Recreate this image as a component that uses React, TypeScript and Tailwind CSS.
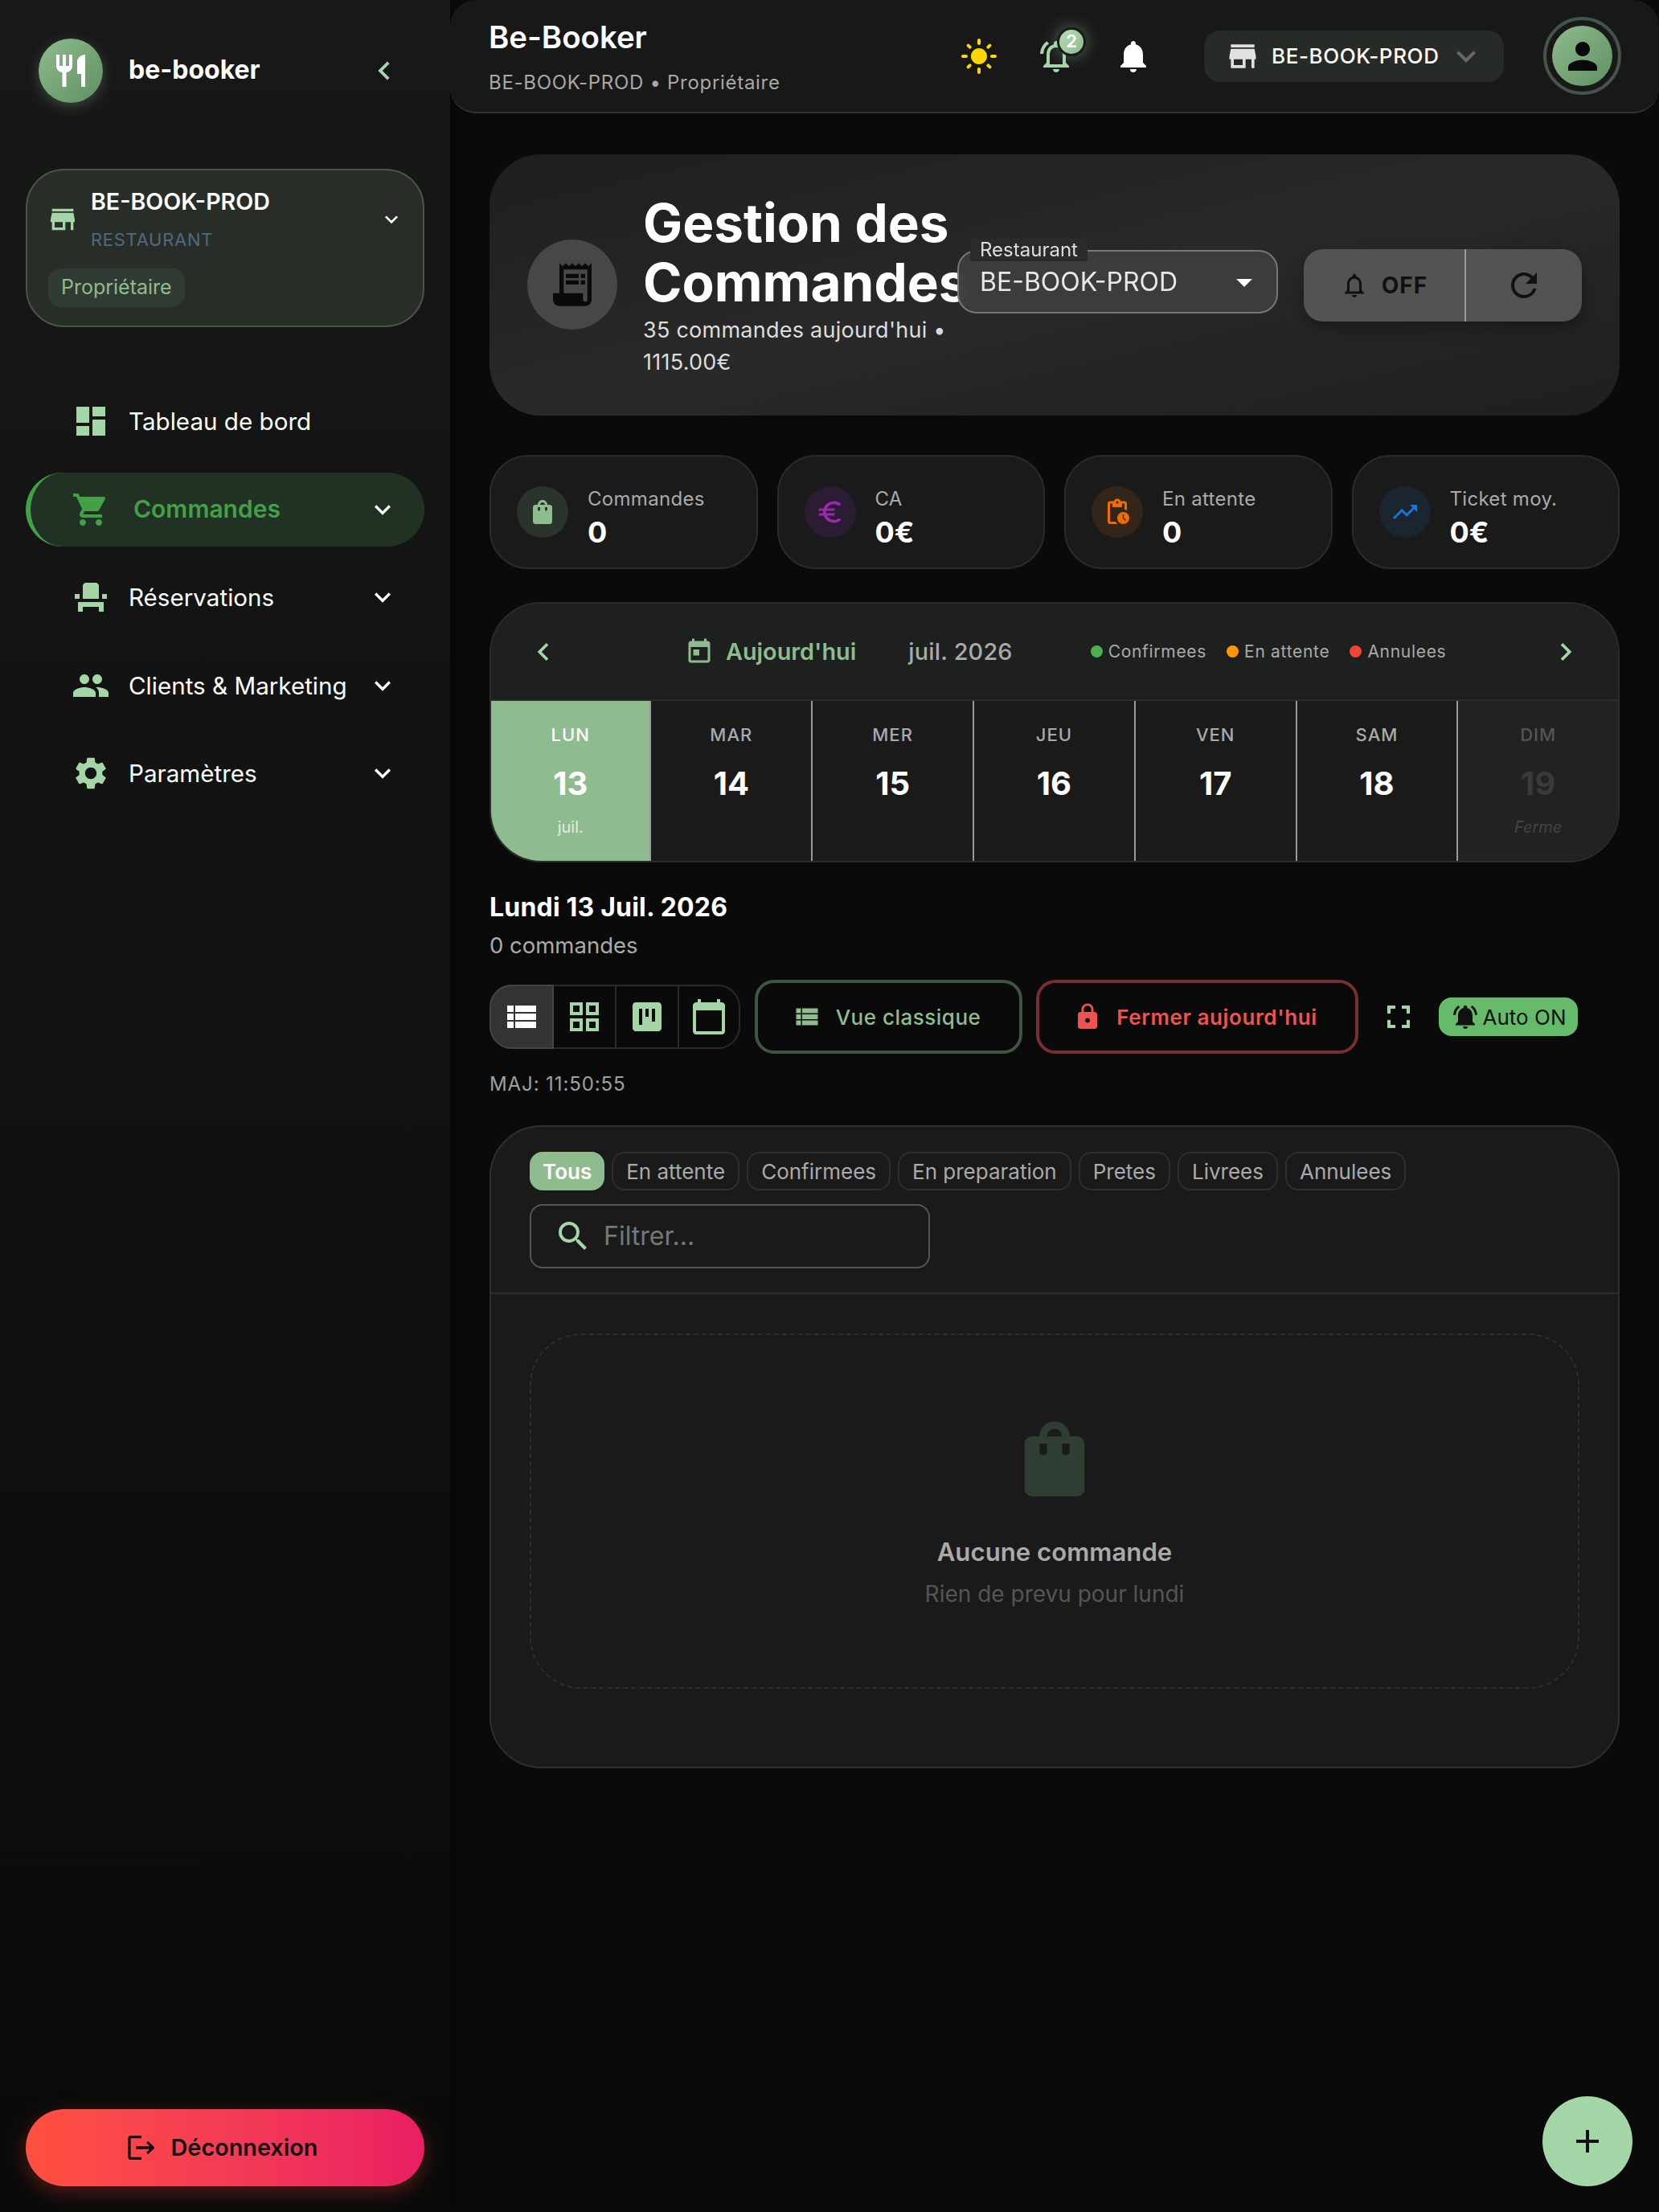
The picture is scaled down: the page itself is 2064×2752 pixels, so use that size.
import React from "react";
import {
  MdRestaurant, MdChevronLeft, MdChevronRight, MdStore, MdExpandMore, MdDashboard, MdShoppingCart, MdEventSeat, MdPeople, MdSettings,
  MdLogout, MdLightMode, MdOutlineNotificationsActive, MdNotifications, MdPerson, MdReceiptLong, MdOutlineNotifications, MdRefresh,
  MdShoppingBag, MdEuro, MdPendingActions, MdTrendingUp, MdToday, MdViewList, MdOutlineGridView, MdViewKanban, MdCalendarToday,
  MdLock, MdFullscreen, MdNotificationsActive, MdSearch, MdAdd, MdArrowDropDown,
} from "react-icons/md";

const nav = [
  { label: "Tableau de bord", Icon: MdDashboard, chevron: false, active: false },
  { label: "Commandes", Icon: MdShoppingCart, chevron: true, active: true },
  { label: "Réservations", Icon: MdEventSeat, chevron: true, active: false },
  { label: "Clients & Marketing", Icon: MdPeople, chevron: true, active: false },
  { label: "Paramètres", Icon: MdSettings, chevron: true, active: false },
];

function Sidebar() {
  return (
    <aside className="w-[560px] h-[2752px] shrink-0 flex flex-col bg-gradient-to-b from-[#181818] to-[#0a0a0a] px-[32px] pt-[47px] pb-[32px] shadow-[4px_0_16px_rgba(0,0,0,0.4)]">
      <div className="flex items-center pl-[16px] h-[81px]">
        <div className="w-[80px] h-[80px] rounded-full bg-gradient-to-br from-[#8fbc8f] to-[#5f8f62] flex items-center justify-center shadow-[0_4px_16px_rgba(143,188,143,0.3)]">
          <MdRestaurant className="text-white" size={48} />
        </div>
        <div className="ml-[32px] -mt-[2px] text-[32px] font-bold text-white">be-booker</div>
        <MdChevronLeft className="ml-auto mr-[27px] text-[#a5d6a7]" size={46} />
      </div>

      <div className="mt-[82px] h-[197px] rounded-[48px] border-2 border-[#465845] bg-[#292d28] pl-[23px] pr-[23px] pt-[20px]">
        <div className="flex items-center">
          <MdStore className="text-[#a5d6a7] ml-[1px] shrink-0" size={40} />
          <div className="ml-[15px] flex-1">
            <div className="text-[28.6px] leading-[38px] font-semibold text-white">BE-BOOK-PROD</div>
            <div className="text-[22px] leading-[30px] mt-[13px] tracking-[0.7px] text-[#4d6a80]">RESTAURANT</div>
          </div>
          <MdExpandMore className="text-white" size={32} />
        </div>
        <div className="mt-[21px] ml-[3px] w-fit h-[48px] flex items-center px-[16px] rounded-[16px] bg-[#313b33] text-[25px] text-[#8fbc8f]">Propriétaire</div>
      </div>

      <nav className="mt-[71px] flex flex-col gap-[17.6px]">
        {nav.map(({ label, Icon, chevron, active }) => (
          <div
            key={label}
            className={
              active
                ? "h-[92px] flex items-center rounded-[46px] border-l-[6px] border-[#43a047] bg-[#213224] pl-[51px] pr-[32px]"
                : "h-[92px] flex items-center pl-[57px] pr-[32px]"
            }
          >
            <Icon className={active ? "text-[#43a047] shrink-0" : "text-[#a5d6a7] shrink-0"} size={48} />
            <span className={active ? "ml-[29px] text-[30px] font-semibold text-[#43a047]" : "ml-[23px] text-[29.6px] text-white"}>{label}</span>
            {chevron && <MdExpandMore className="ml-auto text-white shrink-0" size={40} />}
          </div>
        ))}
      </nav>

      <button className="mt-auto mb-0 h-[96px] rounded-[48px] bg-gradient-to-r from-[#ff5040] to-[#e91e63] flex items-center justify-center gap-[17px] text-[#111] text-[28.8px] font-semibold shadow-[0_8px_24px_rgba(244,67,54,0.3)] pr-[9px]">
        <MdLogout size={40} />
        Déconnexion
      </button>
    </aside>
  );
}

function Header() {
  return (
    <header className="h-[141px] rounded-[32px] bg-[#181818] border-b-2 border-[#333] flex items-center pl-[48px] pr-[47px]">
      <div className="flex-1 mt-[2px]">
        <div className="text-[38.4px] leading-[48px] font-semibold text-white">Be-Booker</div>
        <div className="mt-[17px] text-[24px] leading-[32px] tracking-[0.7px] text-[#a8a8a8]">BE-BOOK-PROD • Propriétaire</div>
      </div>
      <div className="flex items-center gap-[48px] mr-[64px]">
        <MdLightMode className="text-[#ffd600]" size={48} />
        <div className="relative w-[48px] h-[48px]">
          <MdOutlineNotificationsActive className="text-[#a5d6a7]" size={48} />
          <span className="absolute -top-[12px] left-[25px] w-[36px] h-[36px] rounded-full bg-gradient-to-br from-[#b5dcb7] to-[#8fbc8f] border-[3px] border-[#1c1c1c] flex items-center justify-center text-[22px] font-semibold text-white shadow-[0_0_20px_rgba(165,214,167,0.45)]">2</span>
        </div>
        <MdNotifications className="text-white" size={48} />
      </div>
      <div className="w-[373px] h-[64px] rounded-[20px] bg-[#272b27] flex items-center pl-[26px] pr-[23px]">
        <MdStore className="text-[#e0e0e0]" size={44} />
        <span className="ml-[14px] text-[26px] font-medium tracking-[0.6px] text-white">BE-BOOK-PROD</span>
        <MdExpandMore className="ml-auto text-[#666]" size={48} />
      </div>
      <div className="ml-[49px] w-[97px] h-[97px] rounded-full border-4 border-[#45544a] flex items-center justify-center">
        <div className="w-[75px] h-[75px] rounded-full bg-gradient-to-br from-[#8fbc8f] to-[#5f8f62] flex items-center justify-center">
          <MdPerson className="text-[#0a0a0a]" size={54} />
        </div>
      </div>
    </header>
  );
}

function Hero() {
  return (
    <section className="mt-[51px] h-[325px] rounded-[64px] bg-gradient-to-br from-[#1e1e1e] via-[#292929] to-[#1f1f1f] flex items-center pl-[47px] pr-[47px]">
      <div className="w-[112px] h-[112px] rounded-full bg-[#474747] flex items-center justify-center shrink-0 -mt-[2px]">
        <MdReceiptLong className="text-[#0a0a0a]" size={64} />
      </div>
      <div className="ml-[32px] w-[392px] shrink-0">
        <h1 className="text-[65.6px] leading-[74px] font-bold text-white whitespace-nowrap mt-[2px]">Gestion des<br />Commandes</h1>
        <p className="mt-[3px] text-[27px] leading-[40px] tracking-[0.25px] text-[#dddddd]">35 commandes aujourd'hui • 1115.00€</p>
      </div>
      <div className="relative z-10 -ml-[1px] w-[399px] h-[79px] rounded-[24px] border-2 border-[#777] bg-[#3d3d3d]/95 backdrop-blur-md flex items-center pl-[26px] pr-[16px] -translate-y-[4px]">
        <span className="absolute -top-[16px] left-[14px] px-[12px] bg-[#2a2a2a] text-[24px] leading-[28px] text-[#dddddd]">Restaurant</span>
        <span className="text-[32px] text-[#e8e8e8]">BE-BOOK-PROD</span>
        <MdArrowDropDown className="ml-auto text-white" size={48} />
      </div>
      <div className="ml-[32px] w-[347px] h-[90px] rounded-[24px] bg-[#535353] flex shadow-[0_8px_20px_rgba(0,0,0,0.3)]">
        <div className="w-[202px] flex items-center justify-center gap-[16px] border-r-2 border-[#999] text-[#111] text-[28px] font-bold tracking-[1px]">
          <MdOutlineNotifications size={36} />OFF
        </div>
        <div className="flex-1 flex items-center justify-center text-[#111]"><MdRefresh size={48} /></div>
      </div>
    </section>
  );
}

const stats = [
  { label: "Commandes", value: "0", Icon: MdShoppingBag, box: "bg-[#2a332c]", fg: "text-[#8fbc8f]" },
  { label: "CA", value: "0€", Icon: MdEuro, box: "bg-[#2b1c33]", fg: "text-[#9c27b0]" },
  { label: "En attente", value: "0", Icon: MdPendingActions, box: "bg-[#33251a]", fg: "text-[#ef6c00]" },
  { label: "Ticket moy.", value: "0€", Icon: MdTrendingUp, box: "bg-[#1a2530]", fg: "text-[#1976d2]" },
];

function Stats() {
  return (
    <section className="mt-[49px] grid grid-cols-4 gap-[24px]">
      {stats.map(({ label, value, Icon, box, fg }) => (
        <div key={label} className="h-[142px] rounded-[48px] border-2 border-[#2b2b2b] bg-[#1a1a1a] flex items-center pl-[32px]">
          <div className={`w-[64px] h-[64px] rounded-full ${box} flex items-center justify-center shrink-0`}>
            <Icon className={fg} size={36} />
          </div>
          <div className="ml-[24px] mt-[14px]">
            <div className="text-[24px] leading-[32px] tracking-[0.3px] text-[#aaaaaa]">{label}</div>
            <div className="mt-[3px] text-[36px] leading-[44px] font-bold text-white">{value}</div>
          </div>
        </div>
      ))}
    </section>
  );
}

const days = [
  { d: "LUN", n: "13", sub: "juil.", kind: "today" },
  { d: "MAR", n: "14", sub: "", kind: "" },
  { d: "MER", n: "15", sub: "", kind: "" },
  { d: "JEU", n: "16", sub: "", kind: "" },
  { d: "VEN", n: "17", sub: "", kind: "" },
  { d: "SAM", n: "18", sub: "", kind: "" },
  { d: "DIM", n: "19", sub: "Ferme", kind: "closed" },
];

function Legend({ dot, label }: { dot: string; label: string }) {
  return (
    <div className="flex items-center gap-[7px]">
      <span className={`w-[15px] h-[15px] rounded-full ${dot}`} />
      <span className="text-[21px] tracking-[0.7px] text-[#aaaaaa]">{label}</span>
    </div>
  );
}

function Calendar() {
  return (
    <section className="mt-[41px] h-[324px] rounded-[64px] border-2 border-[#2b2b2b] overflow-hidden bg-[#1a1a1a] flex flex-col">
      <div className="h-[121px] shrink-0 bg-[#1e2020] border-b-2 border-[#2d2d2d] flex items-center pl-[43px] pr-[43px]">
        <MdChevronLeft className="text-[#a5d6a7] shrink-0" size={44} />
        <MdToday className="ml-[154px] text-[#8fbc8f] shrink-0" size={36} />
        <span className="ml-[15px] text-[28.8px] font-semibold text-[#8fbc8f]">Aujourd'hui</span>
        <span className="ml-[65px] text-[28.8px] font-medium tracking-[0.2px] text-[#aaaaaa]">juil. 2026</span>
        <div className="ml-[97px] flex items-center gap-[25px]">
          <Legend dot="bg-[#4caf50]" label="Confirmees" />
          <Legend dot="bg-[#ff9800]" label="En attente" />
          <Legend dot="bg-[#f44336]" label="Annulees" />
        </div>
        <MdChevronRight className="ml-auto text-[#a5d6a7] shrink-0" size={44} />
      </div>
      <div className="flex-1 grid grid-cols-[199.4px_repeat(5,200.8px)_1fr]">
        {days.map(({ d, n, sub, kind }, i) => (
          <div
            key={d}
            className={
              (kind === "today" ? "bg-[#8fbc8f] " : kind === "closed" ? "bg-[#222222] " : "bg-[#1a1a1a] ") +
              (i < 6 ? "border-r-2 border-[#999] " : "") +
              "flex flex-col items-center pt-[27px]"
            }
          >
            <span className={"text-[22px] leading-[30px] font-medium tracking-[1px] " + (kind === "today" ? "text-white" : kind === "closed" ? "text-[#555]" : "text-[#aaaaaa]")}>{d}</span>
            <span className={"mt-[16px] text-[40px] leading-[60px] font-bold " + (kind === "closed" ? "text-[#3a3a3a]" : "text-white")}>{n}</span>
            {sub && <span className={"mt-[10px] text-[20px] leading-[28px] " + (kind === "closed" ? "italic text-[#444]" : "text-[#e0eee0]")}>{sub}</span>}
          </div>
        ))}
      </div>
    </section>
  );
}

function Toolbar() {
  return (
    <section className="mt-[35px]">
      <div className="text-[32px] leading-[42px] font-bold tracking-[0.2px] text-white">Lundi 13 Juil. 2026</div>
      <div className="mt-[8px] text-[27.5px] leading-[36px] text-[#aaaaaa]">0 commandes</div>
      <div className="mt-[25px] flex items-center">
        <div className="w-[312px] h-[80px] rounded-[28px] border-2 border-[#2a2a2a] flex">
          <div className="-m-[2px] w-[80px] h-[80px] rounded-l-[28px] bg-[#333] border-2 border-[#444] flex items-center justify-center text-white"><MdViewList size={48} /></div>
          <div className="ml-[2px] w-[78px] border-r-2 border-[#2a2a2a] flex items-center justify-center text-[#a5d6a7]"><MdOutlineGridView size={48} /></div>
          <div className="w-[78px] border-r-2 border-[#2a2a2a] flex items-center justify-center text-[#a5d6a7]"><MdViewKanban size={48} /></div>
          <div className="flex-1 flex items-center justify-center text-[#a5d6a7]"><MdCalendarToday size={48} /></div>
        </div>
        <div className="ml-[18px] w-[333px] h-[92px] rounded-[24px] border-4 border-[#3f5540] flex items-center justify-center gap-[18px] text-[26px] font-medium tracking-[0.5px] text-[#8fbc8f] pr-[5px]">
          <MdViewList size={36} />Vue classique
        </div>
        <div className="ml-[17px] w-[401px] h-[92px] rounded-[24px] border-4 border-[#7a2e2e] flex items-center justify-center gap-[18px] text-[26px] font-semibold tracking-[0.6px] text-[#ef5350] pr-[5px]">
          <MdLock size={36} />Fermer aujourd'hui
        </div>
        <MdFullscreen className="ml-[26px] text-[#a5d6a7]" size={48} />
        <div className="ml-[26px] w-[173px] h-[48px] rounded-[16px] bg-[#66bb6a] flex items-center justify-center gap-[4px] text-[26px] text-[#111]">
          <MdNotificationsActive size={36} />Auto ON
        </div>
      </div>
      <div className="mt-[22px] text-[24px] leading-[32px] tracking-[0.9px] text-[#a0a0a0]">MAJ: 11:50:55</div>
    </section>
  );
}

const chips = ["En attente", "Confirmees", "En preparation", "Pretes", "Livrees", "Annulees"];

function Orders() {
  return (
    <section className="mt-[35px] h-[800px] rounded-[64px] border-2 border-[#2f2f2f] bg-[#1a1a1a] flex flex-col">
      <div className="h-[208px] shrink-0 border-b-2 border-[#2e2e2e] pl-[48px] pt-[31px]">
        <div className="flex gap-[9px]">
          <span className="h-[48px] px-[16px] flex items-center rounded-[16px] bg-[#8fbc8f] text-[26px] font-semibold text-white">Tous</span>
          {chips.map((c) => (
            <span key={c} className="h-[48px] px-[16px] flex items-center rounded-[16px] border-2 border-[#2e2e2e] text-[26px] text-[#aaaaaa]">{c}</span>
          ))}
        </div>
        <div className="mt-[17px] w-[498px] h-[80px] rounded-[16px] border-2 border-[#555] flex items-center pl-[28px]">
          <MdSearch className="text-[#a5d6a7] shrink-0" size={48} />
          <input placeholder="Filtrer..." className="ml-[14px] flex-1 min-w-0 bg-transparent text-[32px] placeholder:text-[#777] outline-none" />
        </div>
      </div>
      <div className="flex-1 px-[48px] pt-[49px]">
        <div className="h-[442px] rounded-[64px] border-2 border-dashed border-[#2e2e2e] flex flex-col items-center pt-[98px]">
          <MdShoppingBag className="text-[#2f3d33]" size={112} />
          <div className="mt-[38px] text-[31.2px] leading-[44px] font-semibold text-[#aaaaaa]">Aucune commande</div>
          <div className="mt-[10px] text-[28px] leading-[40px] text-[#555]">Rien de prevu pour lundi</div>
        </div>
      </div>
    </section>
  );
}

export default function App() {
  return (
    <div className="relative w-[2064px] h-[2752px] overflow-hidden flex bg-[#0a0a0a] font-['Inter',sans-serif]">
      <Sidebar />
      <main className="flex-1 min-w-0">
        <Header />
        <div className="pl-[49px] pr-[49px]">
          <Hero />
          <Stats />
          <Calendar />
          <Toolbar />
          <Orders />
        </div>
      </main>
      <button className="absolute left-[1919px] top-[2608px] w-[112px] h-[112px] rounded-full bg-[#a5d6a7] flex items-center justify-center text-[#111]">
        <MdAdd size={48} />
      </button>
    </div>
  );
}
